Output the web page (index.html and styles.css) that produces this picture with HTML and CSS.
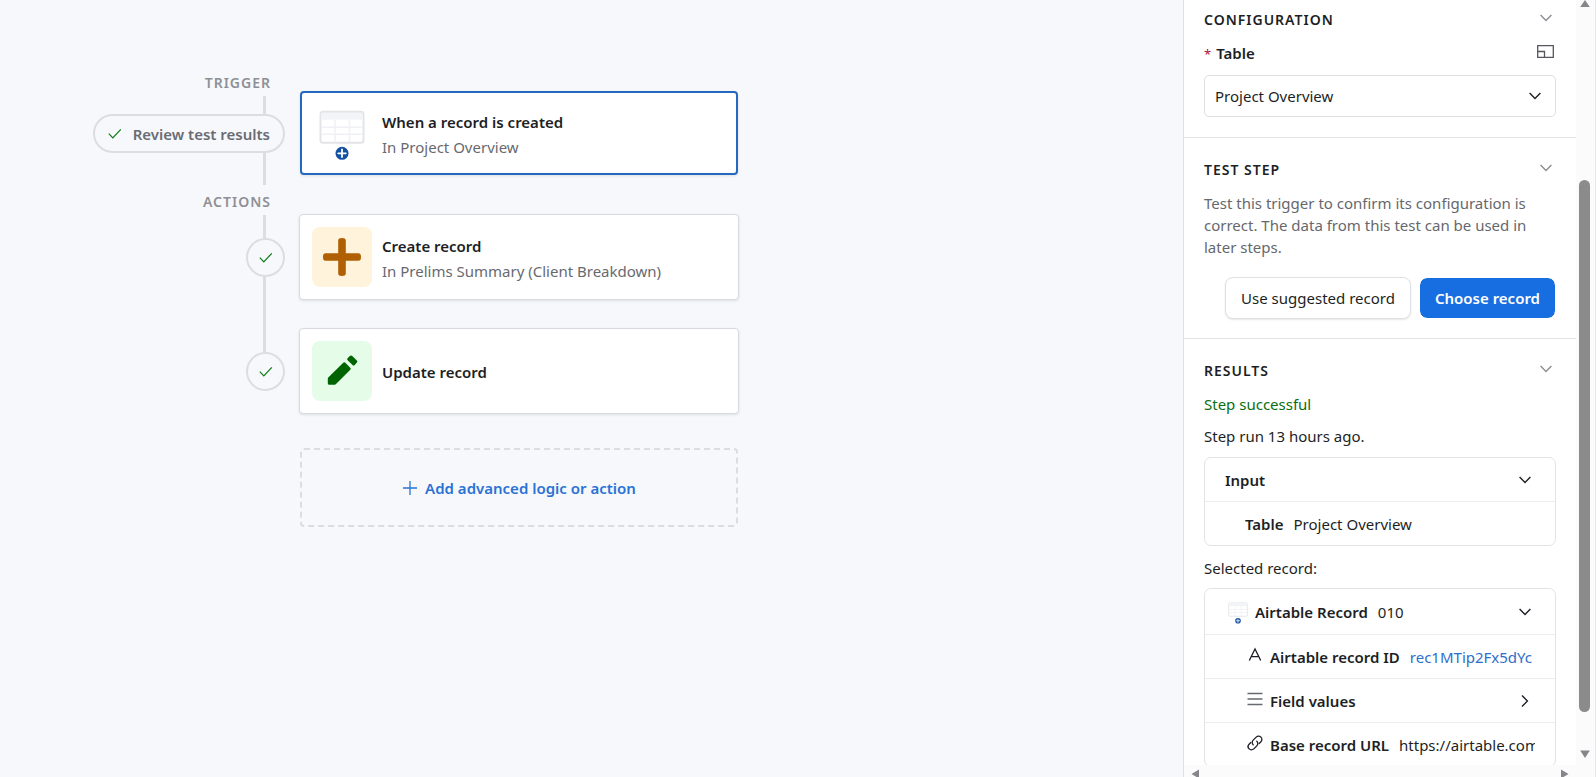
FILE: index.html
```html
<!DOCTYPE html>
<html lang="en">
<head>
    <meta charset="UTF-8">
    <meta name="viewport" content="width=device-width, initial-scale=1.0">
    <title>Automation</title>
    <link rel="stylesheet" href="styles.css">
</head>
<body>
    <!-- Shared icons -->
    <svg class="sprite" aria-hidden="true">
        <symbol id="check" viewBox="0 0 14 12"><path d="M.8 5.700 4.800 9.800 12.800 1.300" fill="none" stroke="currentColor" stroke-width="1.200"/></symbol>
        <symbol id="chevron" viewBox="0 0 12 8"><path d="M.6 1 6 6.4 11.4 1" fill="none" stroke="currentColor" stroke-width="1.4"/></symbol>
        <symbol id="table-created" viewBox="0 0 60 60">
            <rect x="8.5" y="8.8" width="43" height="31" rx="2.5" fill="#fff" stroke="#e3e4e8" stroke-width="2"/>
            <path d="M9.5 9.8h41v7h-41z" fill="#f2f4f8"/>
            <path d="M9.5 24.3h41M9.5 31.3h41M23 17v22M37.5 17v22" stroke="#f0f1f5" stroke-width="1.6"/>
            <circle cx="30" cy="50.3" r="6.5" fill="#144fa3"/>
            <path d="M30 46.5v7.6M26.2 50.3h7.6" stroke="#fff" stroke-width="1.8" stroke-linecap="round"/>
        </symbol>
    </svg>

    <div class="app">
        <main class="canvas">
            <div class="rail">
                <div class="rail-label">TRIGGER</div>
                <div class="rail-line line-short"></div>
                <button class="review-pill">
                    <svg class="check"><use href="#check"/></svg>
                    Review test results
                </button>
                <div class="rail-line line-end"></div>
                <div class="rail-label actions-label">ACTIONS</div>
                <div class="rail-line line-start"></div>
                <button class="status" aria-label="Create record tested"><svg class="check"><use href="#check"/></svg></button>
                <div class="rail-line line-long"></div>
                <button class="status" aria-label="Update record tested"><svg class="check"><use href="#check"/></svg></button>
            </div>

            <div class="steps">
                <button class="step selected">
                    <svg class="tile"><use href="#table-created"/></svg>
                    <span class="step-text">
                        <span class="step-title">When a record is created</span>
                        <span class="step-sub">In Project Overview</span>
                    </span>
                </button>
                <button class="step create">
                    <svg class="tile tile-create" viewBox="0 0 60 60">
                        <path d="M30 11c2.500 0 3.800.8 3.800 2.500V26.200H46.500c1.700 0 2.500 1 2.500 3.800s-.8 3.800-2.500 3.800H33.800V46.500c0 1.700-1.300 2.500-3.800 2.500s-3.800-.8-3.800-2.500V33.800H13.500c-1.700 0-2.500-1-2.500-3.800s.8-3.800 2.500-3.800H26.200V13.500c0-1.700 1.300-2.500 3.800-2.500z" fill="#af6002"/>
                    </svg>
                    <span class="step-text">
                        <span class="step-title">Create record</span>
                        <span class="step-sub">In Prelims Summary (Client Breakdown)</span>
                    </span>
                </button>
                <button class="step update">
                    <svg class="tile tile-update" viewBox="0 0 60 60">
                        <g fill="#006400" stroke="#006400" stroke-width="3" stroke-linejoin="round">
                            <path d="M32.300 22.800 37.200 27.700 22.700 42.300H17.300V37.500z"/>
                            <path d="M36.700 18.200 39.200 16 43.800 20.500 41.600 23z"/>
                        </g>
                    </svg>
                    <span class="step-text">
                        <span class="step-title">Update record</span>
                    </span>
                </button>
                <button class="add-step">
                    <svg class="plus" viewBox="0 0 16 16"><path d="M8 1v14M1 8h14" stroke="currentColor" stroke-width="1.300"/></svg>
                    Add advanced logic or action
                </button>
            </div>
        </main>

        <aside class="panel">
            <div class="panel-body">
                <section class="section config">
                    <div class="section-head">
                        <h2>CONFIGURATION</h2>
                        <button class="toggle" aria-label="Collapse configuration"><svg class="chevron"><use href="#chevron"/></svg></button>
                    </div>
                    <div class="field-head">
                        <label for="table-select"><span class="required">*</span>Table</label>
                        <button class="toggle expand" aria-label="Expand">
                            <svg class="expand-icon" viewBox="0 0 17 13"><path d="M.7.7h15.600v11.600H.7zM.7 6.500h6.800v5.800" fill="none" stroke="currentColor" stroke-width="1.300"/></svg>
                        </button>
                    </div>
                    <div class="select-wrap">
                        <select id="table-select">
                            <option>Project Overview</option>
                        </select>
                        <svg class="chevron select-chevron"><use href="#chevron"/></svg>
                    </div>
                </section>

                <section class="section">
                    <div class="section-head">
                        <h2>TEST STEP</h2>
                        <button class="toggle" aria-label="Collapse test step"><svg class="chevron"><use href="#chevron"/></svg></button>
                    </div>
                    <p class="help">Test this trigger to confirm its configuration is correct. The data from this test can be used in later steps.</p>
                    <div class="buttons">
                        <button class="btn">Use suggested record</button>
                        <button class="btn btn-primary">Choose record</button>
                    </div>
                </section>

                <section class="section results">
                    <div class="section-head">
                        <h2>RESULTS</h2>
                        <button class="toggle" aria-label="Collapse results"><svg class="chevron"><use href="#chevron"/></svg></button>
                    </div>
                    <p class="success">Step successful</p>
                    <p class="run-time">Step run 13 hours ago.</p>
                    <div class="box">
                        <button class="row">
                            <span class="name">Input</span>
                            <svg class="chevron"><use href="#chevron"/></svg>
                        </button>
                        <div class="row nested">
                            <span class="name">Table</span>
                            <span class="value">Project Overview</span>
                        </div>
                    </div>
                    <p class="selected-label">Selected record:</p>
                    <div class="box">
                        <button class="row record">
                            <svg class="record-icon"><use href="#table-created"/></svg>
                            <span class="name">Airtable Record</span>
                            <span class="value">010</span>
                            <svg class="chevron"><use href="#chevron"/></svg>
                        </button>
                        <div class="row nested">
                            <svg class="type-icon" viewBox="0 0 16 16"><path d="M2.300 13.500 8 2l5.700 11.500M4.300 9.700h7.400" fill="none" stroke="currentColor" stroke-width="1.300"/></svg>
                            <span class="name">Airtable record ID</span>
                            <a class="value" href="#">rec1MTip2Fx5dYc</a>
                        </div>
                        <button class="row nested">
                            <svg class="type-icon" viewBox="0 0 16 16"><path d="M.5 2.500h15M.5 8h15M.5 13.500h15" stroke="#666a70" stroke-width="1.500"/></svg>
                            <span class="name">Field values</span>
                            <svg class="chevron chevron-right" viewBox="0 0 8 12"><path d="M1 .6 6.400 6 1 11.400" fill="none" stroke="currentColor" stroke-width="1.400"/></svg>
                        </button>
                        <div class="row nested">
                            <svg class="type-icon" viewBox="0 0 16 16">
                                <g fill="none" stroke="currentColor" stroke-width="1.300" stroke-linecap="round">
                                    <path d="M6.200 9.800a3.300 3.300 0 0 1 0-4.700l3-3a3.300 3.300 0 0 1 4.700 4.700l-1.700 1.700"/>
                                    <path d="M9.800 6.200a3.300 3.300 0 0 1 0 4.700l-3 3a3.300 3.300 0 0 1-4.700-4.700l1.700-1.700"/>
                                </g>
                            </svg>
                            <span class="name">Base record URL</span>
                            <span class="value">https://airtable.com</span>
                        </div>
                    </div>
                </section>
            </div>
            <div class="scroll-x">
                <svg viewBox="0 0 8 10"><path d="M8 .5v9L.5 5z"/></svg>
                <svg viewBox="0 0 8 10"><path d="M0 .5v9L7.500 5z"/></svg>
            </div>
            <div class="scroll-y">
                <svg viewBox="0 0 10 8"><path d="M.2 7h9.600L5 0z"/></svg>
                <div class="track"><div class="thumb"></div></div>
                <svg viewBox="0 0 10 8"><path d="M.2.5h9.600L5 8z"/></svg>
            </div>
        </aside>
    </div>
</body>
</html>
```
FILE: styles.css
```css
* {
    box-sizing: border-box;
}
body {
    margin: 0;
    font-family: "Noto Sans", "Open Sans", sans-serif;
    font-size: 15px;
    line-height: 22px;
    color: #1d1f25;
    background-color: #f7f8fc;
}
button, select {
    font: inherit;
    color: inherit;
}
button {
    cursor: pointer;
}
h2, p {
    margin: 0;
}
.sprite {
    display: none;
}
.app {
    display: flex;
    height: 100vh;
    overflow: hidden;
}

/* Canvas */
.canvas {
    flex: 1;
    display: flex;
    align-items: flex-start;
    gap: 14px;
    padding-left: 80px;
}
.rail {
    width: 205px;
    display: flex;
    flex-direction: column;
    align-items: flex-end;
    padding-top: 72px;
}
.rail-label {
    padding-right: 14px;
    margin-bottom: 2px;
    font-size: 14px;
    font-weight: 600;
    letter-spacing: 1px;
    color: #8e9095;
}
.actions-label {
    margin-top: 6px;
}
.rail-line {
    width: 3px;
    margin-right: 19px;
    background-color: #dcdde1;
}
.line-short {
    height: 18px;
}
.line-end {
    height: 32px;
}
.line-start {
    height: 23px;
}
.line-long {
    height: 75px;
}
.review-pill, .status {
    display: flex;
    align-items: center;
    justify-content: center;
    height: 39px;
    border: 2px solid #dcdde1;
    border-radius: 20px;
    background-color: #f7f8fc;
}
.review-pill {
    gap: 11px;
    padding: 0 13px;
    font-weight: 600;
    color: #6a6c73;
    white-space: nowrap;
}
.status {
    width: 39px;
    padding: 0;
}
.check {
    width: 14px;
    height: 12px;
    color: #0a7a12;
}
.steps {
    width: 440px;
    display: flex;
    flex-direction: column;
    padding-top: 91px;
}
.step {
    display: flex;
    align-items: center;
    gap: 10px;
    padding: 12px;
    border: 1px solid #d9dadf;
    border-radius: 4px;
    background-color: #fff;
    box-shadow: 0 1px 3px rgba(0,0,0,0.1);
    text-align: left;
}
.step.selected {
    margin: 0 1px;
    padding: 10px;
    border: 2px solid #2468c0;
}
.create {
    margin-top: 39px;
}
.update {
    margin-top: 28px;
}
.tile {
    width: 60px;
    height: 60px;
    border-radius: 8px;
}
.tile-create {
    background-color: #fff3db;
}
.tile-update {
    background-color: #e5fce8;
}
.step-text {
    display: flex;
    flex-direction: column;
    padding-top: 3px;
    line-height: 25px;
}
.step-title {
    font-weight: 600;
}
.step-sub {
    color: #68696f;
}
.add-step {
    display: flex;
    align-items: center;
    justify-content: center;
    gap: 7px;
    height: 79px;
    margin: 34px 1px 0;
    border: 2px dashed #dcdde1;
    border-radius: 4px;
    background: none;
    font-weight: 600;
    color: #2a72d4;
}
.plus {
    width: 16px;
    height: 16px;
}

/* Side panel */
.panel {
    width: 413px;
    display: grid;
    grid-template-columns: 1fr 20px;
    grid-template-rows: 1fr 12px;
    border-left: 1px solid #dfe0e4;
    background-color: #fff;
}
.panel-body {
    overflow: hidden;
}
.section {
    padding: 21px 20px 19px;
    border-bottom: 1px solid #e2e3e6;
}
.section.config {
    padding-top: 9px;
    padding-bottom: 20px;
}
.section.results {
    border-bottom: none;
}
.section-head, .field-head {
    display: flex;
    align-items: center;
    justify-content: space-between;
    height: 22px;
}
.section-head {
    margin-bottom: 11px;
}
h2 {
    font-size: 14px;
    font-weight: 600;
    letter-spacing: 1px;
}
.toggle {
    display: flex;
    padding: 0 4px 4px;
    border: none;
    background: none;
    color: #8b8d92;
}
.toggle.expand {
    padding: 0 2px 4px;
    color: #55575c;
}
.chevron {
    flex: none;
    width: 12px;
    height: 8px;
}
.expand-icon {
    width: 17px;
    height: 13px;
}
.field-head {
    margin-bottom: 11px;
    font-weight: 600;
}
.required {
    margin-right: 5px;
    font-size: 13px;
    font-weight: 400;
    color: #b0103f;
}
.select-wrap {
    position: relative;
}
select {
    appearance: none;
    display: block;
    width: 100%;
    height: 42px;
    padding: 0 10px;
    border: 1px solid #e0e1e4;
    border-radius: 5px;
    background-color: #fff;
}
.select-chevron {
    position: absolute;
    right: 15px;
    top: 17px;
}
.help {
    color: #66686d;
}
.buttons {
    display: flex;
    justify-content: flex-end;
    gap: 8px;
    margin-top: 19px;
}
.btn {
    height: 42px;
    padding: 0 15px;
    border: 1px solid #e0e1e4;
    border-radius: 8px;
    background-color: #fff;
    box-shadow: 0 1px 2px rgba(0,0,0,0.1);
}
.btn-primary {
    border-color: #fff;
    background-color: #166ee1;
    background-clip: padding-box;
    box-shadow: none;
    color: #fff;
    font-weight: 600;
}
.success {
    color: #0b6e12;
}
.run-time {
    margin: 10px 0;
}
.selected-label {
    margin: 11px 0 9px;
}
.box {
    border: 1px solid #e2e3e6;
    border-radius: 7px;
}
.row {
    display: flex;
    align-items: center;
    width: 100%;
    height: 43px;
    padding: 0 20px;
    border: none;
    background: none;
    text-align: left;
    white-space: nowrap;
}
.row.record {
    height: 45px;
}
.row.nested {
    height: 44px;
    padding-left: 40px;
    border-top: 1px solid #ebecee;
}
.row .chevron {
    margin: 0 4px 0 auto;
}
.row .chevron-right {
    width: 8px;
    height: 12px;
    margin-right: 6px;
}
.name {
    flex: none;
    font-weight: 600;
}
.value {
    margin-left: 10px;
    overflow: hidden;
}
a.value {
    color: #2d6fc9;
    text-decoration: none;
}
.record-icon {
    flex: none;
    width: 26px;
    height: 26px;
    margin-right: 4px;
}
.type-icon {
    flex: none;
    width: 16px;
    height: 16px;
    margin: 0 7px 4px 2px;
}

/* Scrollbars */
.scroll-x, .scroll-y {
    display: flex;
    justify-content: space-between;
    background-color: #fbfbfb;
    fill: #85868a;
}
.scroll-x {
    grid-area: 2 / 1;
    padding: 4px 7px 0;
}
.scroll-x svg {
    width: 8px;
    height: 10px;
}
.scroll-y {
    grid-area: 1 / 2 / 3 / 3;
    flex-direction: column;
    align-items: center;
    padding: 0 2px 19px 0;
    border-right: 1px solid #e6e6e8;
}
.scroll-y svg {
    width: 10px;
    height: 8px;
}
.track {
    flex: 1;
    padding: 172px 0 38px;
}
.thumb {
    width: 11px;
    height: 100%;
    border-radius: 6px;
    background-color: #8b8b8b;
}
```
